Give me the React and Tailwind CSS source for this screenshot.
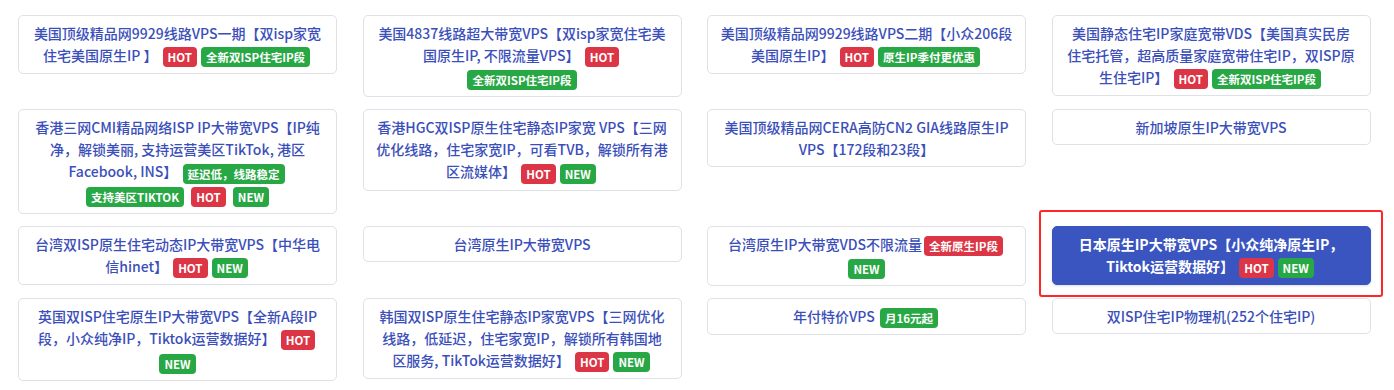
import React from "react";

const Hot = () => (
  <span className="inline-block align-middle rounded-[4px] bg-[#dc3545] px-[5px] py-[3px] text-[11.5px] font-bold leading-[14px] text-white mx-[2px]">HOT</span>
);
const New = () => (
  <span className="inline-block align-middle rounded-[4px] bg-[#28a745] px-[5px] py-[3px] text-[11.5px] font-bold leading-[14px] text-white mx-[2px]">NEW</span>
);
const G = ({ children }) => (
  <span className="inline-block align-middle rounded-[4px] bg-[#28a745] px-[5px] py-[3px] text-[11.5px] font-bold leading-[14px] text-white mx-[2px]">{children}</span>
);
const R = ({ children }) => (
  <span className="inline-block align-middle rounded-[4px] bg-[#dc3545] px-[5px] py-[3px] text-[11.5px] font-bold leading-[14px] text-white mx-[2px]">{children}</span>
);

const Card = ({ children, active }) =>
  active ? (
    <div className="relative rounded-[5px] border border-[#3a54c0] bg-[#3a54c0] px-[12px] py-[6px] text-center text-[14px] font-bold leading-[22px] text-white shadow-sm">
      {children}
      <span className="pointer-events-none absolute -left-[14px] -right-[13px] -top-[17px] -bottom-[13px] rounded-[3px] border-[2.5px] border-[#ff2626]"></span>
    </div>
  ) : (
    <div className="rounded-[5px] border border-[#dfe1e6] bg-white px-[12px] py-[6px] text-center text-[14px] font-medium leading-[22px] text-[#3b4fba]">
      {children}
    </div>
  );

export default function App() {
  return (
    <div
      className="min-h-[390px] w-[1394px] bg-white pl-[18px] pt-[15px]"
      style={{ fontFamily: '"Noto Sans CJK SC", "Noto Sans", sans-serif' }}
    >
      <div className="grid grid-cols-[repeat(4,319px)] items-start gap-x-[25.5px] gap-y-[12px]">
        <Card>
          美国顶级精品网9929线路VPS一期【双isp家宽
          <br />
          住宅美国原生IP 】 <Hot />
          <G>全新双ISP住宅IP段</G>
        </Card>
        <Card>
          美国4837线路超大带宽VPS【双isp家宽住宅美
          <br />
          国原生IP, 不限流量VPS】 <Hot />
          <br />
          <G>全新双ISP住宅IP段</G>
        </Card>
        <Card>
          美国顶级精品网9929线路VPS二期【小众206段
          <br />
          美国原生IP】 <Hot />
          <G>原生IP季付更优惠</G>
        </Card>
        <Card>
          美国静态住宅IP家庭宽带VDS【美国真实民房
          <br />
          住宅托管，超高质量家庭宽带住宅IP，双ISP原
          <br />
          生住宅IP】 <Hot />
          <G>全新双ISP住宅IP段</G>
        </Card>

        <Card>
          香港三网CMI精品网络ISP IP大带宽VPS【IP纯
          <br />
          净，解锁美丽, 支持运营美区TikTok, 港区
          <br />
          Facebook, INS】 <G>延迟低，线路稳定</G>
          <br />
          <G>支持美区TIKTOK</G> <Hot /> <New />
        </Card>
        <Card>
          香港HGC双ISP原生住宅静态IP家宽 VPS【三网
          <br />
          优化线路，住宅家宽IP，可看TVB，解锁所有港
          <br />
          区流媒体】 <Hot />
          <New />
        </Card>
        <Card>
          美国顶级精品网CERA高防CN2 GIA线路原生IP
          <br />
          VPS【172段和23段】
        </Card>
        <Card>新加坡原生IP大带宽VPS</Card>

        <Card>
          台湾双ISP原生住宅动态IP大带宽VPS【中华电
          <br />
          信hinet】 <Hot />
          <New />
        </Card>
        <Card>台湾原生IP大带宽VPS</Card>
        <Card>
          台湾原生IP大带宽VDS不限流量<R>全新原生IP段</R>
          <br />
          <New />
        </Card>
        <Card active>
          日本原生IP大带宽VPS【小众纯净原生IP，
          <br />
          Tiktok运营数据好】 <Hot />
          <New />
        </Card>

        <Card>
          英国双ISP住宅原生IP大带宽VPS【全新A段IP
          <br />
          段，小众纯净IP，Tiktok运营数据好】 <Hot />
          <br />
          <New />
        </Card>
        <Card>
          韩国双ISP原生住宅静态IP家宽VPS【三网优化
          <br />
          线路，低延迟，住宅家宽IP，解锁所有韩国地
          <br />
          区服务, TikTok运营数据好】 <Hot />
          <New />
        </Card>
        <Card>
          年付特价VPS <G>月16元起</G>
        </Card>
        <Card>双ISP住宅IP物理机(252个住宅IP)</Card>
      </div>
    </div>
  );
}
